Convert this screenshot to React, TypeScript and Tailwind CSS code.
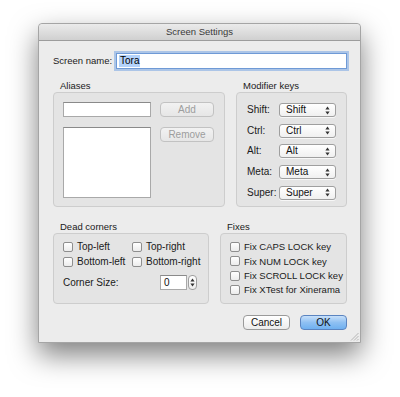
import React from "react";

const font = { fontFamily: '"Liberation Sans", Arial, sans-serif' };

function UpDown({ className = "" }: { className?: string }) {
  return (
    <svg width="5" height="9" viewBox="0 0 5 9" className={className}>
      <path d="M2.5 0.5 L4.6 3.4 L0.4 3.4 Z" fill="#333" />
      <path d="M2.5 8.5 L4.6 5.6 L0.4 5.6 Z" fill="#333" />
    </svg>
  );
}

function Checkbox({ label, size = "text-[10px]" }: { label: string; size?: string }) {
  return (
    <div className="flex items-center gap-[4px] h-[10px]">
      <div className="w-[10px] h-[10px] rounded-[2px] border border-[#8e8e8e] bg-gradient-to-b from-white to-[#ececec] shrink-0" />
      <span className={`${size} leading-none text-[#1a1a1a] whitespace-nowrap`}>{label}</span>
    </div>
  );
}

function Group({ title, className, children }: { title: string; className: string; children: React.ReactNode }) {
  return (
    <div className="flex flex-col">
      <div className="text-[9.5px] leading-[12px] h-[12px] pl-[7px] text-[#1a1a1a]">{title}</div>
      <div className={`rounded-[4px] border border-[#cdcdcd] bg-[#e4e4e4] ${className}`}>{children}</div>
    </div>
  );
}

function Select({ value }: { value: string }) {
  return (
    <div className="w-[57px] h-[14px] rounded-[3px] border border-[#9f9f9f] bg-gradient-to-b from-white to-[#f0f0f0] flex items-center justify-between pl-[6px] pr-[5px] shadow-[0_1px_0_rgba(255,255,255,0.7)]">
      <span className="text-[10px] leading-none text-[#111]">{value}</span>
      <UpDown />
    </div>
  );
}

const modifiers = ["Shift", "Ctrl", "Alt", "Meta", "Super"];

export default function App() {
  return (
    <div className="w-[400px] h-[397px] bg-white pt-[23px] pl-[38px]" style={font}>
      <div className="relative w-[323px] h-[320px] bg-[#ececec] rounded-t-[4px] border border-[#a5a5a5] shadow-[0_12px_28px_rgba(0,0,0,0.5)] flex flex-col">
        {/* Title bar */}
        <div className="h-[17px] rounded-t-[4px] bg-gradient-to-b from-[#ebebeb] to-[#d0d0d0] border-b border-[#9c9c9c] flex items-center justify-center">
          <span className="text-[9.5px] text-[#3a3a3a] leading-none">Screen Settings</span>
        </div>

        <div className="flex flex-col pl-[14px] pr-[13px] pt-[12px]">
          {/* Screen name */}
          <div className="flex items-center gap-[6px]">
            <span className="text-[9.5px] text-[#1a1a1a] w-[57px] whitespace-nowrap">Screen name:</span>
            <div className="flex-1 h-[16px] bg-white border border-[#6f9ad6] shadow-[0_0_0_2px_rgba(120,165,228,0.55)] flex items-center pl-[2px]">
              <span className="text-[10px] leading-[12px] bg-[#b4d3fb] px-[1px] text-black">Tora</span>
            </div>
          </div>

          {/* Aliases + Modifier keys */}
          <div className="flex gap-[11px] mt-[11px]">
            <Group title="Aliases" className="w-[172px] h-[115px]">
              <div className="grid grid-cols-[88px_54px] gap-x-[9px] gap-y-[10px] pl-[9px] pt-[9px]">
                <div className="h-[15px] bg-white border border-[#a9a9a9] border-t-[#8a8a8a]" />
                <div className="h-[15px] rounded-[4px] border border-[#c2c2c2] bg-gradient-to-b from-[#f2f2f2] to-[#e6e6e6] flex items-center justify-center text-[10px] text-[#9d9d9d]">Add</div>
                <div className="h-[71px] bg-white border border-[#a9a9a9] border-t-[#8a8a8a]" />
                <div className="h-[15px] rounded-[4px] border border-[#c2c2c2] bg-gradient-to-b from-[#f2f2f2] to-[#e6e6e6] flex items-center justify-center text-[10px] text-[#9d9d9d]">Remove</div>
              </div>
            </Group>
            <Group title="Modifier keys" className="w-[111px] h-[115px]">
              <div className="flex flex-col gap-[6.7px] pt-[10px] pl-[10px]">
                {modifiers.map((m) => (
                  <div key={m} className="flex items-center">
                    <span className="w-[32px] text-[10px] leading-none text-[#1a1a1a]">{m}:</span>
                    <Select value={m} />
                  </div>
                ))}
              </div>
            </Group>
          </div>

          {/* Dead corners + Fixes */}
          <div className="flex gap-[11px] mt-[14px]">
            <Group title="Dead corners" className="w-[156px] h-[71px]">
              <div className="flex flex-col pl-[9px] pt-[8px]">
                <div className="grid grid-cols-[69px_1fr] gap-y-[5px]">
                  <Checkbox label="Top-left" />
                  <Checkbox label="Top-right" />
                  <Checkbox label="Bottom-left" />
                  <Checkbox label="Bottom-right" />
                </div>
                <div className="flex items-center mt-[8px]">
                  <span className="w-[97px] text-[10px] leading-none text-[#1a1a1a]">Corner Size:</span>
                  <div className="w-[27px] h-[15px] bg-white border border-[#a9a9a9] border-t-[#8a8a8a] flex items-center pl-[3px] text-[10px] text-[#111]">0</div>
                  <div className="ml-[1px] w-[9px] h-[15px] rounded-[4px] border border-[#9f9f9f] bg-gradient-to-b from-white to-[#eeeeee] flex items-center justify-center">
                    <UpDown />
                  </div>
                </div>
              </div>
            </Group>
            <Group title="Fixes" className="w-[127px] h-[71px]">
              <div className="flex flex-col gap-[4.3px] pl-[9px] pt-[8px]">
                <Checkbox label="Fix CAPS LOCK key" size="text-[9.5px]" />
                <Checkbox label="Fix NUM LOCK key" size="text-[9.5px]" />
                <Checkbox label="Fix SCROLL LOCK key" size="text-[9.5px]" />
                <Checkbox label="Fix XTest for Xinerama" size="text-[9.5px]" />
              </div>
            </Group>
          </div>

          {/* Buttons */}
          <div className="flex justify-end gap-[10px] mt-[11px]">
            <div className="w-[47px] h-[15px] rounded-[4px] border border-[#9a9a9a] bg-gradient-to-b from-white to-[#ececec] flex items-center justify-center text-[10px] text-[#111]">Cancel</div>
            <div className="w-[47px] h-[15px] rounded-[4px] border border-[#5b84c0] bg-gradient-to-b from-[#c7e0fa] via-[#8fc0f2] to-[#6fb0f0] flex items-center justify-center text-[10px] text-[#111]">OK</div>
          </div>
        </div>

        {/* Resize grip */}
        <svg width="9" height="9" viewBox="0 0 9 9" className="absolute right-[1px] bottom-[1px]">
          <path d="M8.5 1 L1 8.5 M8.5 4 L4 8.5 M8.5 7 L7 8.5" stroke="#a8a8a8" strokeWidth="0.8" />
        </svg>
      </div>
    </div>
  );
}
